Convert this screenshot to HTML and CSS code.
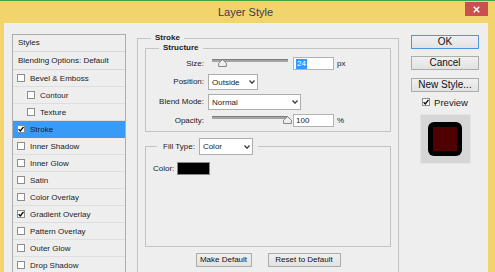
FILE: index.html
```html
<!DOCTYPE html>
<html>
<head>
<meta charset="utf-8">
<title>Layer Style</title>
<link rel="stylesheet" href="styles.css">
</head>
<body>
<div class="topline"></div>
<div class="titlebar">
  <span class="title">Layer Style</span>
  <span class="close"><svg width="7" height="7" viewBox="0 0 7 7"><path d="M0.8 0.8 6.2 6.2 M6.2 0.8 0.8 6.2" stroke="#fff" stroke-width="1.6"/></svg></span>
</div>
<div class="body">
  <div class="styles">
    <div class="head">Styles</div>
    <div class="head blend">Blending Options: Default</div>
    <div class="item"><svg class="cb" viewBox="0 0 8 8"><rect x=".5" y=".5" width="7" height="7"/></svg>Bevel &amp; Emboss</div>
    <div class="item sub"><svg class="cb" viewBox="0 0 8 8"><rect x=".5" y=".5" width="7" height="7"/></svg>Contour</div>
    <div class="item sub"><svg class="cb" viewBox="0 0 8 8"><rect x=".5" y=".5" width="7" height="7"/></svg>Texture</div>
    <div class="item selected"><svg class="cb" viewBox="0 0 8 8"><rect x=".5" y=".5" width="7" height="7"/><path class="tick" d="M1.6 4.1 3.3 5.9 6.5 1.8"/></svg>Stroke</div>
    <div class="item"><svg class="cb" viewBox="0 0 8 8"><rect x=".5" y=".5" width="7" height="7"/></svg>Inner Shadow</div>
    <div class="item"><svg class="cb" viewBox="0 0 8 8"><rect x=".5" y=".5" width="7" height="7"/></svg>Inner Glow</div>
    <div class="item"><svg class="cb" viewBox="0 0 8 8"><rect x=".5" y=".5" width="7" height="7"/></svg>Satin</div>
    <div class="item"><svg class="cb" viewBox="0 0 8 8"><rect x=".5" y=".5" width="7" height="7"/></svg>Color Overlay</div>
    <div class="item"><svg class="cb" viewBox="0 0 8 8"><rect x=".5" y=".5" width="7" height="7"/><path class="tick" d="M1.6 4.1 3.3 5.9 6.5 1.8"/></svg>Gradient Overlay</div>
    <div class="item"><svg class="cb" viewBox="0 0 8 8"><rect x=".5" y=".5" width="7" height="7"/></svg>Pattern Overlay</div>
    <div class="item"><svg class="cb" viewBox="0 0 8 8"><rect x=".5" y=".5" width="7" height="7"/></svg>Outer Glow</div>
    <div class="item"><svg class="cb" viewBox="0 0 8 8"><rect x=".5" y=".5" width="7" height="7"/></svg>Drop Shadow</div>
  </div>

  <fieldset class="group stroke">
    <legend>Stroke</legend>
    <fieldset class="group structure">
      <legend>Structure</legend>
      <div class="row short">
        <span class="lbl">Size:</span>
        <div class="slider"><div class="track"><svg class="thumb" style="left:6px" width="9" height="8" viewBox="0 0 9 8"><path d="M4.5 0.6 8.4 4.2 V7.5 H0.6 V4.2 Z"/></svg></div></div>
        <span class="field"><span class="hl">24</span></span>
        <span class="unit">px</span>
      </div>
      <div class="row">
        <span class="lbl">Position:</span>
        <span class="select pos"><span>Outside</span><svg class="chev" width="6" height="4" viewBox="0 0 6 4"><path d="M0.5 0.5 3 3.2 5.5 0.5"/></svg></span>
      </div>
      <div class="row">
        <span class="lbl">Blend Mode:</span>
        <span class="select mode"><span>Normal</span><svg class="chev" width="6" height="4" viewBox="0 0 6 4"><path d="M0.5 0.5 3 3.2 5.5 0.5"/></svg></span>
      </div>
      <div class="row short">
        <span class="lbl">Opacity:</span>
        <div class="slider"><div class="track"><svg class="thumb" style="left:71px" width="9" height="8" viewBox="0 0 9 8"><path d="M4.5 0.6 8.4 4.2 V7.5 H0.6 V4.2 Z"/></svg></div></div>
        <span class="field">100</span>
        <span class="unit">%</span>
      </div>
    </fieldset>

    <fieldset class="group fill">
      <legend><span>Fill Type:</span><span class="select ftype"><span>Color</span><svg class="chev" width="6" height="4" viewBox="0 0 6 4"><path d="M0.5 0.5 3 3.2 5.5 0.5"/></svg></span></legend>
      <div class="fill-body">
        <span>Color:</span><span class="swatch"></span>
      </div>
    </fieldset>

    <div class="bottom-btns">
      <span class="btn small mk">Make Default</span>
      <span class="btn small rs">Reset to Default</span>
    </div>
  </fieldset>

  <div class="actions">
    <span class="btn big default">OK</span>
    <span class="btn big cancel">Cancel</span>
    <span class="btn big newst">New Style...</span>
    <div class="preview"><svg class="cb" viewBox="0 0 8 8"><rect x=".5" y=".5" width="7" height="7"/><path class="tick" d="M1.6 4.1 3.3 5.9 6.5 1.8"/></svg>Preview</div>
    <div class="thumbbox"><div class="sq"><div class="sq-in"></div></div></div>
  </div>
</div>
</body>
</html>
```
FILE: styles.css
```css
* { box-sizing: border-box; }
html, body { margin: 0; padding: 0; }
body {
  width: 495px;
  height: 272px;
  overflow: hidden;
  background: #f1d46b;
  font-family: "Liberation Sans", Arial, sans-serif;
  color: #1b1b1b;
  font-size: 8px;
}
.topline { height: 1px; background: #3ea548; }
.titlebar {
  height: 22px;
  display: grid;
  grid-template-columns: 1fr auto 1fr;
  align-items: start;
}
.title {
  grid-column: 2;
  font-size: 11px;
  line-height: 22px;
  color: #3b3b3b;
  padding-right: 4px;
}
.close {
  grid-column: 3;
  justify-self: end;
  width: 23px;
  height: 14px;
  margin: 1px 7px 0 0;
  background: #c9504f;
  display: flex;
  align-items: center;
  justify-content: center;
}
.body {
  display: flex;
  align-items: flex-start;
  margin: 0 7px 0 4px;
  height: 249px;
  background: #eeeeee;
  padding-left: 8px;
  overflow: hidden;
}

/* styles list */
.styles {
  flex: none;
  width: 114px;
  height: 260px;
  margin-top: 11px;
  border: 1px solid #adadad;
}
.head {
  height: 17px;
  border-bottom: 1px solid #d6d6d6;
  padding-left: 5px;
  line-height: 16px;
}
.head.blend { height: 18px; line-height: 17px; }
.item {
  height: 17px;
  display: flex;
  align-items: center;
  gap: 5px;
  padding-left: 4px;
  border-bottom: 1px solid #dedede;
}
.item.sub { padding-left: 14px; }
.item.selected { background: #3a9bf6; border-bottom-color: #3a9bf6; }
.cb { width: 8px; height: 8px; flex: none; }
.cb rect { fill: #fff; stroke: #8d8d8d; }
.cb .tick { fill: none; stroke: #000; stroke-width: 1.3; }

/* group boxes */
.group {
  margin: 0;
  min-width: 0;
  border: 1px solid #c3c3c3;
}
legend {
  font-weight: bold;
  line-height: 10px;
  padding: 0 4px;
}
.group.stroke {
  flex: none;
  width: 262px;
  height: 260px;
  margin: 10px 0 0 11px;
  padding: 0 7px;
}
.stroke > legend { margin-left: 6px; }
.group.structure {
  padding: 4px 0;
  display: flex;
  flex-direction: column;
  gap: 4px;
}
.structure > legend { margin-left: 13px; }
.row {
  display: flex;
  align-items: center;
  height: 16px;
}
.row.short { height: 13px; align-items: flex-start; }
.lbl {
  width: 58px;
  margin-right: 4px;
  text-align: right;
  line-height: 13px;
}
.row:not(.short) .lbl { line-height: 16px; }
.slider { width: 81px; height: 13px; padding: 2px 0 0 4px; }
.track {
  position: relative;
  width: 76px;
  height: 3px;
  background: #a4a4a4;
  border-top: 1px solid #7d7d7d;
}
.thumb { position: absolute; top: -1px; }
.thumb path { fill: #efefef; stroke: #858585; stroke-width: 1; }
.field {
  width: 41px;
  height: 13px;
  margin-left: 4px;
  background: #fff;
  border: 1px solid #b3b3b3;
  padding-left: 2px;
  line-height: 11px;
}
.hl { background: #3399ff; color: #fff; padding: 0 1px; display: inline-block; line-height: 10px; }
.unit { margin-left: 3px; line-height: 13px; }
.select {
  display: flex;
  align-items: center;
  justify-content: space-between;
  height: 16px;
  background: #fff;
  border: 1px solid #adadad;
  padding: 0 2px 0 3px;
  font-weight: normal;
}
.select.pos { width: 50px; }
.select.mode { width: 93px; }
.chev { flex: none; }
.chev path { fill: none; stroke: #333; stroke-width: 1.2; }

.group.fill { margin-top: 6px; padding: 0; }
.fill > legend {
  margin-left: 11px;
  padding: 0 5px 0 6px;
  display: flex;
  align-items: center;
  gap: 4px;
  font-weight: normal;
  line-height: 17px;
}
.select.ftype { width: 54px; height: 17px; }
.fill-body {
  height: 91px;
  padding: 7px 0 0 7px;
  display: flex;
  align-items: flex-start;
  gap: 3px;
  line-height: 13px;
}
.swatch {
  width: 33px;
  height: 13px;
  background: #000;
  border: 1px solid #8a8a8a;
}
.bottom-btns {
  display: flex;
  justify-content: center;
  gap: 16px;
  margin-top: 6px;
}

/* buttons */
.btn {
  display: block;
  height: 14px;
  border: 1px solid #acacac;
  background: linear-gradient(#f0f0f0, #e2e2e2);
  text-align: center;
  color: #111;
}
.btn.small { line-height: 12px; }
.btn.mk { width: 56px; }
.btn.rs { width: 73px; }
.actions {
  flex: none;
  width: 68px;
  margin: 12px 0 0 12px;
  display: flex;
  flex-direction: column;
  align-items: stretch;
}
.btn.big { font-size: 10px; line-height: 12px; }
.btn.default { border-color: #4c97dc; }
.btn.cancel { margin-top: 7px; }
.btn.newst { margin-top: 8px; }
.preview {
  margin-top: 5px;
  height: 10px;
  display: flex;
  align-items: center;
  justify-content: center;
  gap: 4px;
  font-size: 9.5px;
}
.thumbbox {
  align-self: center;
  margin-top: 7px;
  width: 51px;
  height: 50px;
  background: #d6d6d6;
  border: 1px solid #e4e4e4;
  display: flex;
  align-items: center;
  justify-content: center;
}
.sq {
  width: 34px;
  height: 34px;
  background: #000;
  border-radius: 6px;
  padding: 5px;
}
.sq-in { width: 24px; height: 24px; background: #4f0000; }
```
